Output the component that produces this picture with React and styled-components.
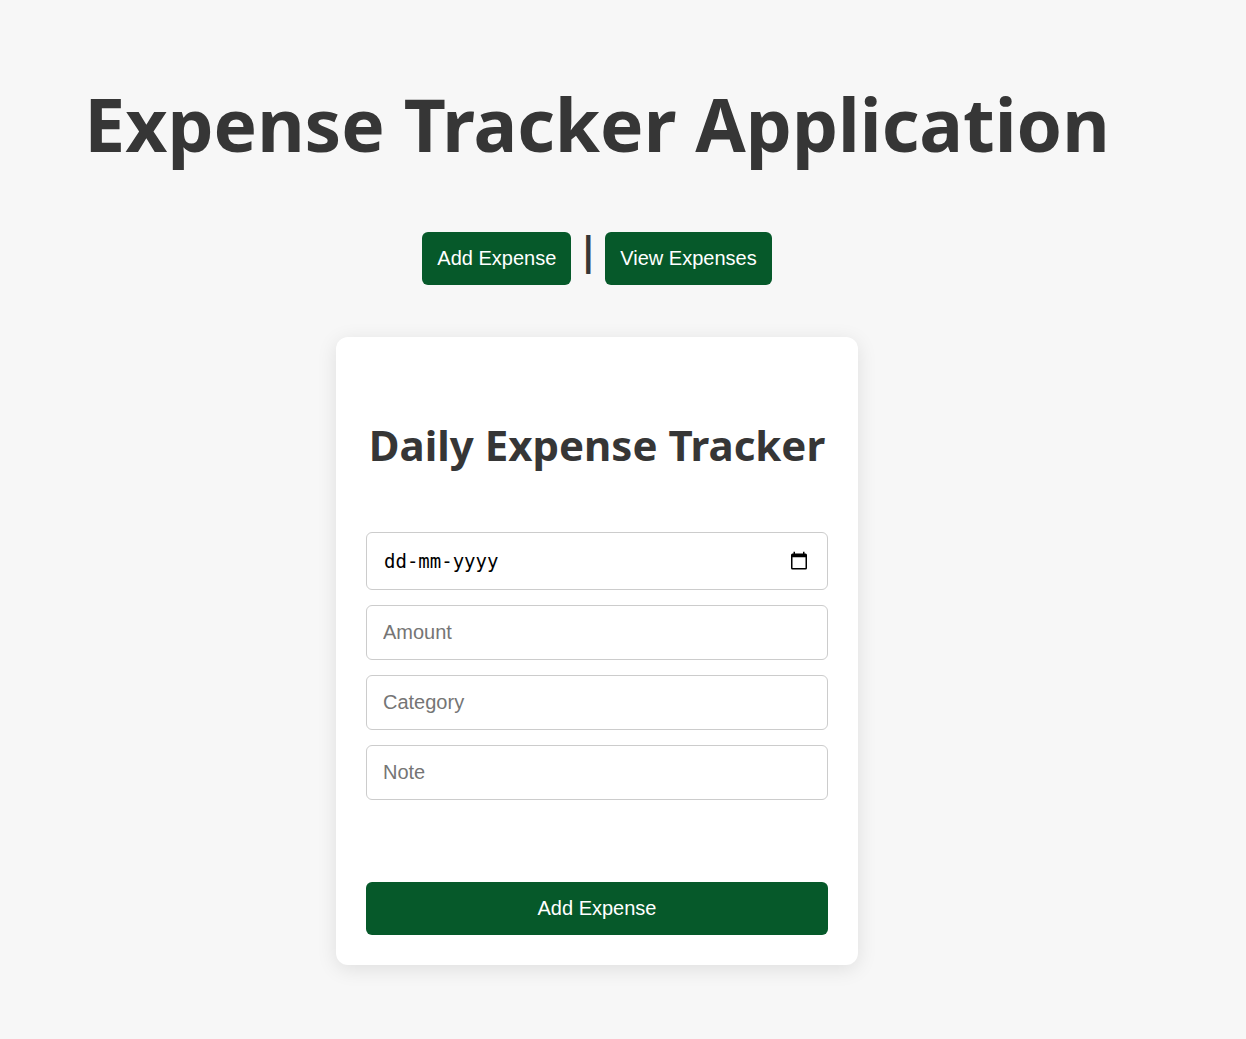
import React, { useState } from 'react';
import styled, { createGlobalStyle } from 'styled-components';

const GlobalStyle = createGlobalStyle`
  body {
    margin: 0;
    background: #f7f7f7;
    color: #363636;
    font-family: "Noto Sans", "Open Sans", sans-serif;
  }
`;

const Page = styled.div`
  box-sizing: border-box;
  display: flex;
  flex-direction: column;
  align-items: center;
  padding: 74px 52px 74px 0;
`;

const Title = styled.h1`
  margin: 0 0 58px;
  font-size: 73px;
  line-height: 100px;
  font-weight: 700;
  text-align: center;
`;

const Nav = styled.nav`
  display: flex;
  align-items: flex-start;
  gap: 6px;
  margin-bottom: 52px;
`;

const Divider = styled.span`
  width: 22px;
  text-align: center;
  font-size: 40px;
  line-height: 35px;
  font-weight: 700;
`;

const Button = styled.button`
  box-sizing: border-box;
  height: 53px;
  padding: 0 15px;
  border: 0;
  border-radius: 6px;
  background: #06592a;
  color: #fff;
  font: 20px "Liberation Sans", Arial, sans-serif;
  cursor: pointer;
`;

const Card = styled.form`
  box-sizing: border-box;
  display: flex;
  flex-direction: column;
  width: 100%;
  max-width: 522px;
  padding: 78px 30px 30px;
  border-radius: 12px;
  background: #fff;
  box-shadow: 0 4px 20px rgba(0, 0, 0, 0.1);
`;

const Heading = styled.h2`
  margin: 0 0 57px;
  font-size: 42px;
  line-height: 60px;
  text-align: center;
`;

const Fields = styled.div`
  display: flex;
  flex-direction: column;
  gap: 15px;
  margin-bottom: 82px;
`;

const Field = styled.input`
  box-sizing: border-box;
  width: 100%;
  height: 55px;
  padding: 0 16px;
  border: 1px solid #ccc;
  border-radius: 6px;
  background: #fff;
  font: 20px "Liberation Sans", Arial, sans-serif;
  &::placeholder { color: #757575; }
`;

const DateBox = styled.div`
  box-sizing: border-box;
  display: flex;
  align-items: center;
  height: 58px;
  padding: 0 18px 0 17px;
  border: 1px solid #ccc;
  border-radius: 6px;
`;

const DateInput = styled.input`
  flex: 1;
  min-width: 0;
  padding: 0;
  border: 0;
  outline: 0;
  background: transparent;
  font: 19px "DejaVu Sans Mono", monospace;
  &::placeholder { color: #000; opacity: 1; }
`;

const PickerButton = styled.button`
  display: flex;
  padding: 0;
  border: 0;
  background: transparent;
  color: #000;
  cursor: pointer;
`;

function CalendarIcon() {
  return (
    <svg width="20" height="20" viewBox="0 0 20 20" fill="currentColor" aria-hidden="true">
      <path fillRule="evenodd" d="M4.500 .8H6v1.600h8V.8h1.500v1.600h1A1.500 1.500 0 0 1 18 3.900v13.200a1.500 1.500 0 0 1-1.500 1.500h-13A1.500 1.500 0 0 1 2 17.100V3.900a1.500 1.500 0 0 1 1.500-1.500h1zM3.500 6.300v10.800h13V6.300z" />
    </svg>
  );
}

export default function App() {
  const [values, setValues] = useState({ date: '', amount: '', category: '', note: '' });
  const update = (event) => setValues({ ...values, [event.target.name]: event.target.value });
  return (
    <>
      <GlobalStyle />
      <Page>
        <Title>Expense Tracker Application</Title>
        <Nav>
          <Button type="button">Add Expense</Button>
          <Divider>|</Divider>
          <Button type="button">View Expenses</Button>
        </Nav>
        <Card onSubmit={(event) => event.preventDefault()}>
          <Heading>Daily Expense Tracker</Heading>
          <Fields>
            <DateBox>
              <DateInput name="date" aria-label="Date" placeholder="dd-mm-yyyy" value={values.date} onChange={update} />
              <PickerButton type="button" aria-label="Choose date">
                <CalendarIcon />
              </PickerButton>
            </DateBox>
            <Field name="amount" aria-label="Amount" placeholder="Amount" inputMode="decimal" value={values.amount} onChange={update} />
            <Field name="category" aria-label="Category" placeholder="Category" value={values.category} onChange={update} />
            <Field name="note" aria-label="Note" placeholder="Note" value={values.note} onChange={update} />
          </Fields>
          <Button type="submit">Add Expense</Button>
        </Card>
      </Page>
    </>
  );
}
